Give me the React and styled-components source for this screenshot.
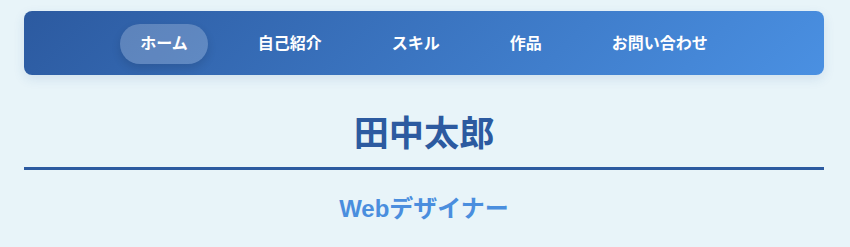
import React, { useState } from "react";
import styled, { createGlobalStyle } from "styled-components";

const GlobalStyle = createGlobalStyle`
  * {
    box-sizing: border-box;
  }

  body {
    margin: 0;
    background: #e8f4f9;
    font-family: "Liberation Sans", "Noto Sans CJK JP", sans-serif;
  }
`;

const Page = styled.div`
  width: 800px;
  margin: 0 24px;
  padding-top: 11px;
`;

const NavBar = styled.nav`
  display: flex;
  justify-content: center;
  align-items: center;
  gap: 30px;
  height: 64px;
  padding: 2px 20px 0;
  border-radius: 8px;
  background: linear-gradient(135deg, #2c5aa0, #4a90e2);
  box-shadow: 0 4px 12px rgba(44, 90, 160, 0.12);
`;

const NavLink = styled.a`
  display: block;
  padding: 10px 20px;
  border-radius: 20px;
  color: #fff;
  font-size: 16px;
  font-weight: 700;
  line-height: 20px;
  text-decoration: none;
  cursor: pointer;
  background: ${(p) => (p.$active ? "rgba(255, 255, 255, 0.22)" : "transparent")};
  box-shadow: ${(p) => (p.$active ? "0 4px 10px rgba(0, 0, 0, 0.12)" : "none")};
`;

const Header = styled.header`
  text-align: center;
`;

const Name = styled.h1`
  margin: 34px 0 0;
  padding-bottom: 8px;
  border-bottom: 3px solid #2c5aa0;
  color: #2c5aa0;
  font-size: 35.2px;
  font-weight: 700;
  line-height: 50px;
`;

const Role = styled.h2`
  margin: 22px 0 0;
  color: #4a8ede;
  font-size: 24px;
  font-weight: 700;
  line-height: 34px;
`;

const links = ["ホーム", "自己紹介", "スキル", "作品", "お問い合わせ"];

const App = () => {
  const [active, setActive] = useState(0);

  return (
    <>
      <GlobalStyle />
      <Page>
        <NavBar>
          {links.map((label, i) => (
            <NavLink key={label} $active={i === active} onClick={() => setActive(i)}>
              {label}
            </NavLink>
          ))}
        </NavBar>
        <Header>
          <Name>田中太郎</Name>
          <Role>Webデザイナー</Role>
        </Header>
      </Page>
    </>
  );
};

export default App;
